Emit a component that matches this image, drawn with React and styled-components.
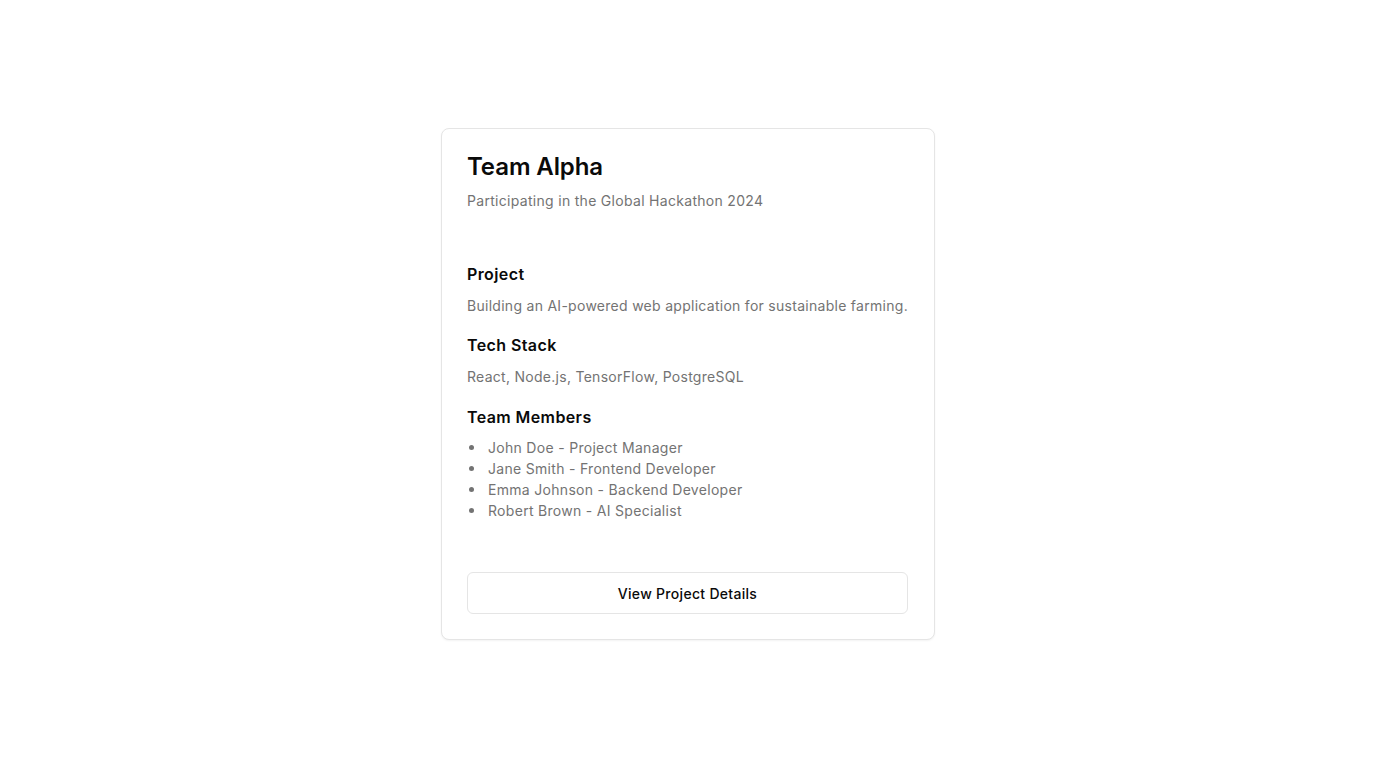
import React from "react";
import styled, { createGlobalStyle } from "styled-components";

const Global = createGlobalStyle`
  * { box-sizing: border-box; }
  html, body { margin: 0; padding: 0; background: #ffffff; }
  body { font-family: Inter, "Noto Sans", sans-serif; color: #0a0a0a; -webkit-font-smoothing: antialiased; }
`;

const Page = styled.div`
  min-height: 768px;
  display: flex;
  align-items: center;
  justify-content: center;
`;

const Card = styled.div`
  width: 494px;
  border: 1px solid #e5e5e5;
  border-radius: 8px;
  background: #fff;
  box-shadow: 0 1px 2px rgba(0, 0, 0, 0.05);
`;

const Header = styled.div`
  padding: 24px 25px 0;
  display: flex;
  flex-direction: column;
`;

const Title = styled.h2`
  margin: 0;
  font-size: 24px;
  line-height: 28px;
  font-weight: 600;
  letter-spacing: -0.1px;
  color: #0a0a0a;
`;

const Description = styled.p`
  margin: 10px 0 0;
  font-size: 14px;
  line-height: 20px;
  letter-spacing: 0.3px;
  color: #737373;
`;

const Content = styled.div`
  padding: 51px 25px 0;
  display: flex;
  flex-direction: column;
`;

const Section = styled.section`
  margin-top: ${(p) => p.$gap ?? 17}px;
`;

const SectionTitle = styled.h3`
  margin: 0;
  font-size: 16px;
  line-height: 24px;
  font-weight: 600;
  letter-spacing: 0.4px;
  color: #0a0a0a;
`;

const Text = styled.p`
  margin: 9px 0 0;
  font-size: 14px;
  line-height: 21px;
  letter-spacing: 0.28px;
  white-space: nowrap;
  color: #737373;
`;

const List = styled.ul`
  margin: 8px 0 0;
  padding-left: 0;
  list-style: none;
  font-size: 14px;
  line-height: 21px;
  letter-spacing: 0.3px;
  color: #737373;
`;

const Item = styled.li`
  display: flex;
  align-items: center;
  gap: 14px;
  &::before {
    content: "";
    width: 5px;
    height: 5px;
    margin-left: 2px;
    border-radius: 50%;
    background: #737373;
    flex: none;
  }
`;

const Footer = styled.div`
  padding: 51px 26px 25px 25px;
`;

const Button = styled.button`
  width: 100%;
  height: 42px;
  border: 1px solid #e5e5e5;
  border-radius: 6px;
  background: #fff;
  font-family: Inter, "Noto Sans", sans-serif;
  font-size: 14px;
  font-weight: 500;
  letter-spacing: 0.3px;
  color: #0a0a0a;
  cursor: pointer;
`;

const members = [
  "John Doe - Project Manager",
  "Jane Smith - Frontend Developer",
  "Emma Johnson - Backend Developer",
  "Robert Brown - AI Specialist",
];

export default function App() {
  return (
    <>
      <Global />
      <Page>
        <Card>
          <Header>
            <Title>Team Alpha</Title>
            <Description>Participating in the Global Hackathon 2024</Description>
          </Header>
          <Content>
            <Section $gap={0}>
              <SectionTitle>Project</SectionTitle>
              <Text>Building an AI-powered web application for sustainable farming.</Text>
            </Section>
            <Section>
              <SectionTitle>Tech Stack</SectionTitle>
              <Text>React, Node.js, TensorFlow, PostgreSQL</Text>
            </Section>
            <Section $gap={18}>
              <SectionTitle>Team Members</SectionTitle>
              <List>
                {members.map((m) => (
                  <Item key={m}>{m}</Item>
                ))}
              </List>
            </Section>
          </Content>
          <Footer>
            <Button>View Project Details</Button>
          </Footer>
        </Card>
      </Page>
    </>
  );
}
